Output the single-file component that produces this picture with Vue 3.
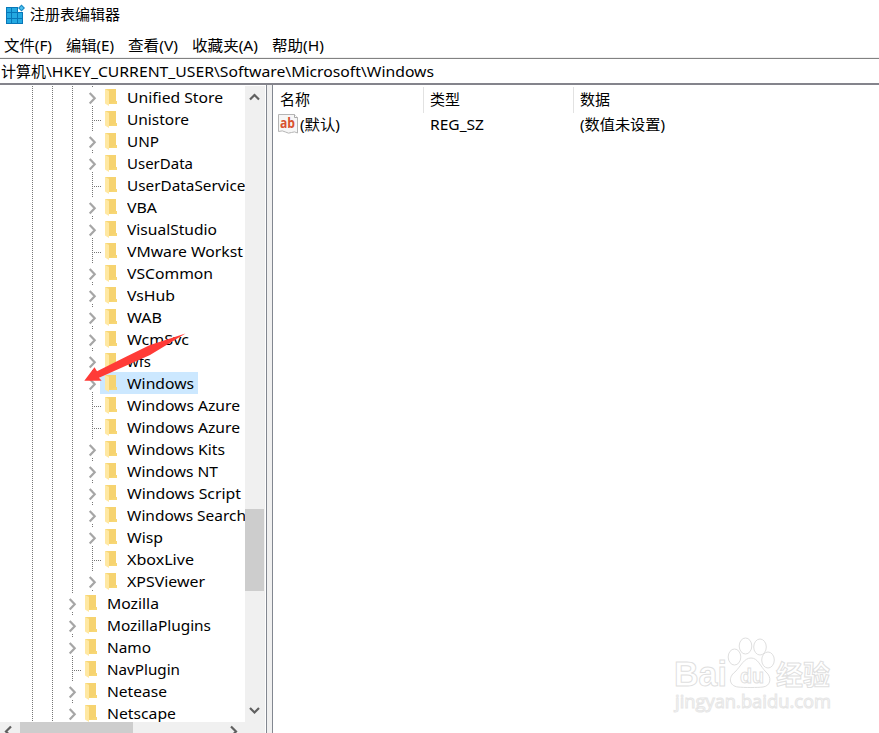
<script setup>
const raw = [
  ['Unified Store', 1, 96], ['Unistore', 0, 62], ['UNP', 1, 32], ['UserData', 1, 66], ['UserDataService', 0, 118.5], ['VBA', 1, 30],
  ['VisualStudio', 1, 90], ['VMware Workst', 0, 116], ['VSCommon', 1, 86], ['VsHub', 1, 48], ['WAB', 1, 35],
  ['WcmSvc', 1, 62], ['wfs', 1, 24], ['Windows', 1, 67], ['Windows Azure', 0, 113], ['Windows Azure', 0, 113],
  ['Windows Kits', 1, 98], ['Windows NT', 1, 91], ['Windows Script', 1, 114], ['Windows Search', 1, 119],
  ['Wisp', 1, 36], ['XboxLive', 0, 67], ['XPSViewer', 1, 78], ['Mozilla', 1, 52], ['MozillaPlugins', 1, 104],
  ['Namo', 1, 44], ['NavPlugin', 0, 73], ['Netease', 1, 60], ['Netscape', 1, 69],
]
const rows = raw.map(([name, open, width], i) => ({
  name, open, width, guides: i < 23 ? 3 : 2, selected: i === 13,
}))
const menu = [['文件(F)', 48], ['编辑(E)', 48], ['查看(V)', 50], ['收藏夹(A)', 66], ['帮助(H)', 52]]
</script>

<template>
  <div class="window">
    <header class="title">
      <svg class="app-icon" width="20" height="20" viewBox="0 0 20 20">
        <path d="M1 3h12v5h5v12H1z" fill="#0877b8" />
        <path d="M2 4h4v4H2zM7 4h5v4H7zM2 9h4v5H2zM7 9h5v5H7zM13 9h4v5h-4zM2 15h4v4H2zM7 15h5v4H7zM13 15h4v4h-4z" fill="#24a9e1" />
        <path d="M16.500 0.500l3.500 3.500-3.500 3.500L13 4z" fill="#1688c4" />
        <path d="M16.500 2l2 2-2 2-2-2z" fill="#51c0ee" />
      </svg>
      <svg class="label" width="92" height="22"><text x="0" y="16" textLength="90">注册表编辑器</text></svg>
    </header>
    <nav class="menu">
      <svg v-for="m in menu" :key="m[0]" class="label" :width="m[1]" height="22">
        <text x="0" y="16" :textLength="m[1]" lengthAdjust="spacingAndGlyphs">{{ m[0] }}</text>
      </svg>
    </nav>
    <div class="address">
      <svg class="label" width="440" height="22">
        <text x="0" y="16" textLength="45">计算机</text>
        <text x="45" y="16" textLength="388" lengthAdjust="spacingAndGlyphs">\HKEY_CURRENT_USER\Software\Microsoft\Windows</text>
      </svg>
    </div>
    <main class="body">
      <section class="tree-pane">
        <div class="tree-top">
          <div class="tree">
            <div v-for="(r, i) in rows" :key="i" class="row">
              <i v-for="g in r.guides" :key="g" class="guide"></i>
              <span class="branch">
                <svg width="20" height="22" viewBox="0 0 20 22">
                  <path v-if="r.open" d="M9.500 0v2M9.500 20v2" class="dots" />
                  <path v-else d="M9.500 0v22M11 12.500h7" class="dots" />
                  <path v-if="r.open" d="M6.700 7l5 5.200-5 5.200" class="chevron" />
                </svg>
              </span>
              <span class="node" :class="{ selected: r.selected }">
                <svg class="folder" width="15" height="18" viewBox="0 0 15 18">
                  <path d="M1 0h11v12h1v3H4z" fill="#f8d775" />
                  <path d="M5 0h7v12l-7 3z" fill="#f3cf6c" opacity=".5" />
                  <path d="M1 0l4 2v15l-4-2.500z" fill="#ffe8a2" />
                </svg>
                <svg class="label" :width="r.width + 2" height="22">
                  <text x="0" y="17" :textLength="r.width" lengthAdjust="spacingAndGlyphs">{{ r.name }}</text>
                </svg>
              </span>
            </div>
          </div>
          <div class="vscroll">
            <svg class="arrow" width="19" height="20"><path d="M5 13.500L9.500 9l4.500 4.500" /></svg>
            <div class="vthumb"></div>
            <svg class="arrow" width="19" height="20"><path d="M5 8l4.500 4.500L14 8" /></svg>
          </div>
        </div>
        <div class="hscroll">
          <svg class="arrow" width="20" height="11"><path d="M11 4.500L6 9.500l2 2" /></svg>
          <div class="hthumb"></div>
          <svg class="arrow" width="20" height="11"><path d="M7 4.500l5 5-2 2" /></svg>
        </div>
        <svg class="pointer" width="105" height="54" viewBox="0 0 105 54">
          <path d="M.3 47.700L10.500 34.300l2.500 4L44 22.700 66 12 101.500.5 66 22 15 44.700l2.700 3z" fill="#ff3b37" />
        </svg>
      </section>
      <div class="splitter"></div>
      <section class="values">
        <div class="grid head">
          <svg class="label" width="32" height="22"><text x="0" y="17" textLength="30">名称</text></svg>
          <svg class="label" width="32" height="22"><text x="0" y="17" textLength="30">类型</text></svg>
          <svg class="label" width="32" height="22"><text x="0" y="17" textLength="30">数据</text></svg>
        </div>
        <div class="grid entry">
          <div class="name-cell">
            <svg width="20" height="22" viewBox="0 0 20 22">
              <path d="M.5 1.500h16l3 3V20q-3-2-6-.5t-6-.5-7-.5z" fill="#f6f6f6" stroke="#b5b5b5" />
              <path d="M16.500 1.500v3h3" fill="#fff" stroke="#a9a9a9" />
              <text x="2" y="15" class="ab" textLength="15" lengthAdjust="spacingAndGlyphs">ab</text>
            </svg>
            <svg class="label" width="42" height="22"><text x="0" y="17" textLength="40" lengthAdjust="spacingAndGlyphs">(默认)</text></svg>
          </div>
          <svg class="label" width="56" height="22"><text x="0" y="17" textLength="54" lengthAdjust="spacingAndGlyphs">REG_SZ</text></svg>
          <svg class="label" width="87" height="22"><text x="0" y="17" textLength="85" lengthAdjust="spacingAndGlyphs">(数值未设置)</text></svg>
        </div>
        <svg class="watermark" width="170" height="80" viewBox="0 0 170 80">
          <g class="outline">
            <text x="3" y="50" class="brand" textLength="53" lengthAdjust="spacingAndGlyphs">Bai</text>
            <ellipse cx="63.500" cy="21" rx="6.300" ry="8" />
            <ellipse cx="74.500" cy="10" rx="6.300" ry="8" />
            <ellipse cx="89" cy="11" rx="6.300" ry="8" />
            <ellipse cx="97" cy="24" rx="6.300" ry="8" />
            <path d="M80 22c7 0 9 8 15 14 6 5 5 14-3 15-5 .7-19 .7-25 0-9-1-10-10-3-15 6-6 9-14 16-14z" />
            <text x="69" y="47" class="du" textLength="24" lengthAdjust="spacingAndGlyphs">du</text>
            <text x="105" y="49" class="cn" textLength="54">经验</text>
            <text x="4" y="72" class="url" textLength="156" lengthAdjust="spacingAndGlyphs">jingyan.baidu.com</text>
          </g>
        </svg>
      </section>
    </main>
  </div>
</template>

<style>
body { overflow: hidden; }
</style>
<style scoped>
.window { width: 879px; height: 733px; display: flex; flex-direction: column; background: #fff; overflow: hidden; font: 15px "Open Sans", "Noto Sans CJK SC", sans-serif; color: #000; }
svg { display: block; flex: none; }
.label text { font: 15px "Noto Sans", "Noto Sans CJK SC", sans-serif; fill: #000; }
.title { height: 32px; flex: none; display: flex; gap: 5px; padding: 4px 0 0 5px; box-sizing: border-box; }
.menu { height: 26px; flex: none; display: flex; gap: 14px; padding: 3px 0 0 3.500px; box-sizing: border-box; border-bottom: 1px solid #f0f0f0; }
.address { height: 27px; flex: none; box-sizing: border-box; padding: 2px 0 0 1px; border-top: 1px solid #828282; border-bottom: 2px solid #84848c; }
.body { flex: 1; min-height: 0; display: flex; }
.tree-pane { position: relative; width: 265px; flex: none; display: flex; flex-direction: column; padding-top: 1px; box-sizing: border-box; }
.tree-top { height: 636px; flex: none; display: flex; overflow: hidden; }
.tree { width: 245px; overflow: hidden; padding-left: 23px; box-sizing: border-box; }
.row { display: flex; height: 22px; }
.guide { flex: none; width: 20px; height: 22px; background: repeating-linear-gradient(to bottom, #777 0 1px, transparent 1px 2px) 9px 0 / 1px 22px no-repeat; }
.branch { flex: none; width: 17px; overflow: visible; }
.dots { stroke: #777; stroke-dasharray: 1 1; fill: none; }
.chevron { stroke: #a6a6a6; stroke-width: 2.200; fill: none; }
.node { display: flex; flex: none; height: 22px; padding: 0 2px 0 4px; }
.node.selected { background: #cce8ff; }
.folder { margin: 3px 8px 0 0; }
.vscroll { width: 20px; background: #f0f0f0; display: flex; flex-direction: column; }
.vthumb { width: 19px; height: 82px; margin: 403px 0 109px; background: #cdcdcd; }
.arrow path { stroke: #606060; stroke-width: 2.200; fill: none; }
.hscroll { height: 11px; flex: none; display: flex; background: #f0f0f0; overflow: hidden; }
.hthumb { width: 113px; margin-right: 91px; background: #cdcdcd; }
.pointer { position: absolute; left: 84px; top: 248px; }
.splitter { width: 7px; flex: none; margin-left: 1px; background: #f0f0f0; border-left: 1px solid #828790; border-right: 1px solid #828790; box-sizing: border-box; }
.values { position: relative; flex: 1; padding-top: 2px; }
.grid { display: grid; grid-template-columns: 150px 150px 1fr; }
.head { height: 26px; }
.head .label { box-sizing: content-box; padding: 1px 0 0 7px; }
.head .label:not(:first-child) { border-left: 1px solid #e2e2e2; height: 25px; padding-left: 6px; }
.entry { padding-left: 7px; }
.name-cell { display: flex; gap: 2px; margin-left: -2px; }
.ab { font: bold 14.500px "Open Sans", sans-serif; fill: #d8512f; }
.watermark { position: absolute; right: 38px; bottom: 17px; }
.outline { fill: #fff; stroke: #dfdfdf; stroke-width: 1; }
.brand { font: bold 35px "Liberation Sans", sans-serif; }
.du { font: bold 21px "Liberation Sans", sans-serif; }
.cn { font: bold 27px "Noto Sans CJK SC", sans-serif; }
.url { font: 18px "Open Sans", sans-serif; stroke: #e6e6e6; }
</style>
